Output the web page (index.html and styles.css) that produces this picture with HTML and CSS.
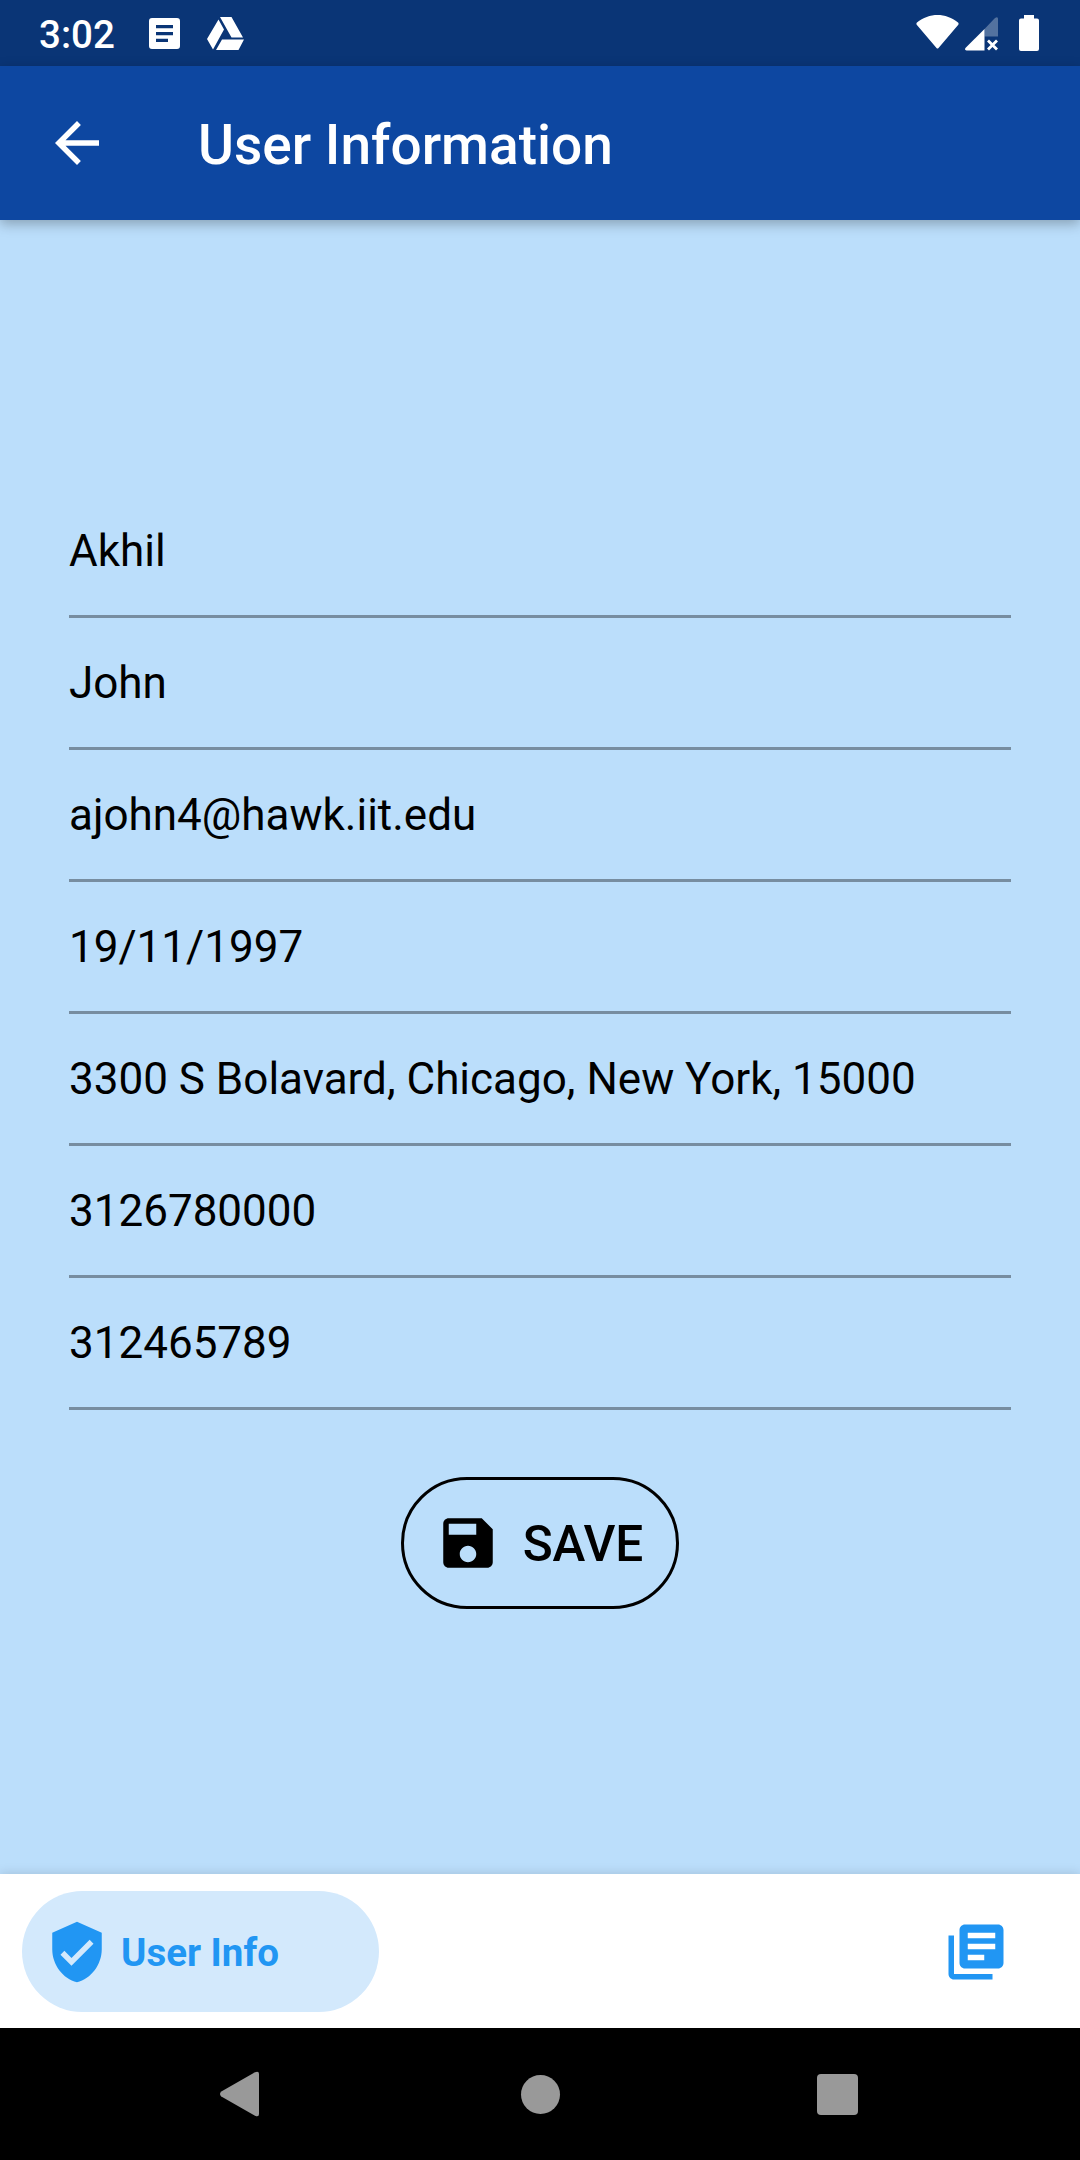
FILE: index.html
```html
<!DOCTYPE html>
<html lang="en">
<head>
    <meta charset="UTF-8">
    <meta name="viewport" content="width=device-width, initial-scale=1.0">
    <title>User Information</title>
    <link rel="stylesheet" href="styles.css">
</head>
<body>

    <!-- Status bar -->
    <div class="status-bar">
        <span class="clock">3:02</span>
        <svg class="icon-article" viewBox="0 0 31 31"><path fill="#fff" fill-rule="evenodd" d="M3 0h25a3 3 0 0 1 3 3v25a3 3 0 0 1-3 3H3a3 3 0 0 1-3-3V3a3 3 0 0 1 3-3zM7 7v3.200h17V7zM7 14v3.200h17V14zM7 20.700v3.200h12v-3.200z"/></svg>
        <svg class="icon-drive" viewBox="0 0 37 33"><path fill="#fff" d="M13 0h11.500l11.500 20.500H24.500zM11.500 2.500L17 12.500 6 32.500 0 22zM15 22.500h22L31.500 33H9z"/></svg>
        <div class="status-right">
            <svg class="icon-wifi" viewBox="0 0 43 34"><path fill="#fff" d="M1 7.500C13-2.500 30-2.500 42 7.500q1 1 .3 2.200L22.500 33q-1 1.200-2 0L.7 9.700Q0 8.500 1 7.500z"/></svg>
            <svg class="icon-signal" viewBox="0 0 33 34"><path fill="#fff" opacity=".3" d="M19.500 12L30 1q3-2 3 1v17.500H19.500z"/><path fill="#fff" d="M19.500 12v21.500H1.500Q-1 33 .7 30.700z"/><path stroke="#fff" stroke-width="2.800" d="M23 23.500l9 9M32 23.500l-9 9"/></svg>
            <svg class="icon-battery" viewBox="0 0 20 36"><path fill="#fff" d="M5 0h10v3.500h3q2 0 2 2V34q0 2-2 2H2q-2 0-2-2V5.500q0-2 2-2h3z"/></svg>
        </div>
    </div>

    <!-- App bar -->
    <div class="app-bar">
        <svg class="icon" viewBox="0 0 24 24"><path fill="#fff" d="M20 11H7.830l5.590-5.590L12 4l-8 8 8 8 1.410-1.410L7.830 13H20v-2z"/></svg>
        <h1>User Information</h1>
    </div>

    <!-- User form -->
    <form class="content">
        <input type="text" value="Akhil">
        <input type="text" value="John">
        <input type="text" value="ajohn4@hawk.iit.edu">
        <input type="text" value="19/11/1997">
        <input type="text" value="3300 S Bolavard, Chicago, New York, 15000">
        <input type="text" value="3126780000">
        <input type="text" value="312465789">
        <button type="button" class="save">
            <svg class="icon" viewBox="0 0 24 24"><path d="M17 3H5c-1.110 0-2 .9-2 2v14c0 1.100.89 2 2 2h14c1.100 0 2-.9 2-2V7l-4-4zm-5 16c-1.660 0-3-1.340-3-3s1.340-3 3-3 3 1.340 3 3-1.340 3-3 3zm3-10H5V5h10v4z"/></svg>
            <span>SAVE</span>
        </button>
    </form>

    <!-- Bottom tabs -->
    <div class="tabs">
        <a class="tab active">
            <svg class="icon" viewBox="0 0 24 24"><path fill="#2196f3" d="M12 1L3 5v6c0 5.550 3.840 10.740 9 12 5.160-1.260 9-6.450 9-12V5l-9-4zm-2 16l-4-4 1.410-1.410L10 14.170l6.590-6.590L18 9l-8 8z"/></svg>
            <span>User Info</span>
        </a>
        <a class="tab">
            <svg class="icon" viewBox="0 0 24 24"><path fill="#2196f3" d="M4 6H2v14c0 1.100.9 2 2 2h14v-2H4V6zm16-4H8c-1.100 0-2 .9-2 2v12c0 1.100.9 2 2 2h12c1.100 0 2-.9 2-2V4c0-1.100-.9-2-2-2zm-1 9H9V9h10v2zm-4 4H9v-2h6v2zm4-8H9V5h10v2z"/></svg>
        </a>
    </div>

    <!-- System navigation -->
    <div class="nav-bar">
        <svg class="nav-back" viewBox="0 0 39 46"><path fill="#999" d="M1.300 20.500L35 1.200Q39-.5 39 3v40q0 3.500-4 1.800L1.300 25.500q-2.600-2.500 0-5z"/></svg>
        <div class="nav-home"></div>
        <div class="nav-recent"></div>
    </div>

</body>
</html>
```

FILE: styles.css
```css
/* General styles */
body {
    font-family: Roboto, sans-serif;
    margin: 0;
    height: 2160px;
    display: flex;
    flex-direction: column;
    background-color: #bbdefb;
    color: #000;
    overflow: hidden;
}
svg {
    display: block;
    flex: none;
}
.icon {
    width: 66px;
    height: 66px;
}

/* Status bar */
.status-bar {
    height: 66px;
    box-sizing: border-box;
    padding: 0 41px 0 39px;
    display: flex;
    align-items: center;
    background-color: #0a3576;
    color: #fff;
}
.clock {
    width: 110px;
    font-size: 38.5px;
    font-weight: 500;
    line-height: 66px;
    padding-top: 3px;
}
.icon-article {
    width: 31px;
    height: 31px;
    margin-top: 1px;
}
.icon-drive {
    width: 37px;
    height: 33px;
    margin-left: 27px;
}
.status-right {
    display: flex;
    align-items: center;
    margin-left: auto;
}
.icon-wifi {
    width: 43px;
    height: 34px;
    margin-bottom: 2px;
}
.icon-signal {
    width: 33px;
    height: 34px;
    margin: 2px 21px 0 6px;
}
.icon-battery {
    width: 20px;
    height: 36px;
}

/* App bar */
.app-bar {
    height: 154px;
    box-sizing: border-box;
    padding-left: 44px;
    display: flex;
    align-items: center;
    background-color: #0d47a1;
    color: #fff;
    box-shadow: 0 4px 12px rgba(0, 0, 0, 0.28);
}
.app-bar h1 {
    margin: 4px 0 0 88px;
    font-size: 55px;
    font-weight: 500;
}

/* User form */
.content {
    flex: 1;
    padding: 266px 69px 0;
    display: flex;
    flex-direction: column;
}
.content input {
    height: 132px;
    box-sizing: border-box;
    padding: 0;
    border: none;
    border-bottom: 3px solid #778da0;
    border-radius: 0;
    background: none;
    font-family: inherit;
    font-size: 44px;
    color: #000;
    outline: none;
}
.save {
    align-self: center;
    width: 278px;
    height: 132px;
    margin-top: 67px;
    padding: 0 2px 0 0;
    display: flex;
    align-items: center;
    justify-content: center;
    gap: 22px;
    border: 3px solid #000;
    border-radius: 66px;
    background: none;
    font-family: inherit;
    font-size: 49.5px;
    font-weight: 500;
    color: #000;
}
.save span {
    padding-top: 2px;
}

/* Bottom tabs */
.tabs {
    height: 154px;
    box-sizing: border-box;
    padding: 0 22px;
    display: flex;
    align-items: center;
    justify-content: space-between;
    background-color: #fff;
    box-shadow: 0 0 11px rgba(0, 0, 0, 0.15);
}
.tab {
    height: 121px;
    padding: 1px 49px 0;
    display: flex;
    align-items: center;
}
.tab.active {
    width: 357px;
    box-sizing: border-box;
    padding: 2px 22px 0;
    gap: 11px;
    border-radius: 61px;
    background-color: #d3e9fc;
    color: #2196f3;
    font-size: 38.5px;
    font-weight: 700;
}

/* System navigation */
.nav-bar {
    height: 132px;
    box-sizing: border-box;
    padding: 0 222px 0 220px;
    display: flex;
    align-items: center;
    justify-content: space-between;
    background-color: #000;
}
.nav-back {
    width: 39px;
    height: 46px;
}
.nav-home {
    width: 39px;
    height: 39px;
    margin-left: 4px;
    border-radius: 50%;
    background-color: #999;
}
.nav-recent {
    width: 41px;
    height: 41px;
    border-radius: 4px;
    background-color: #999;
}
```
